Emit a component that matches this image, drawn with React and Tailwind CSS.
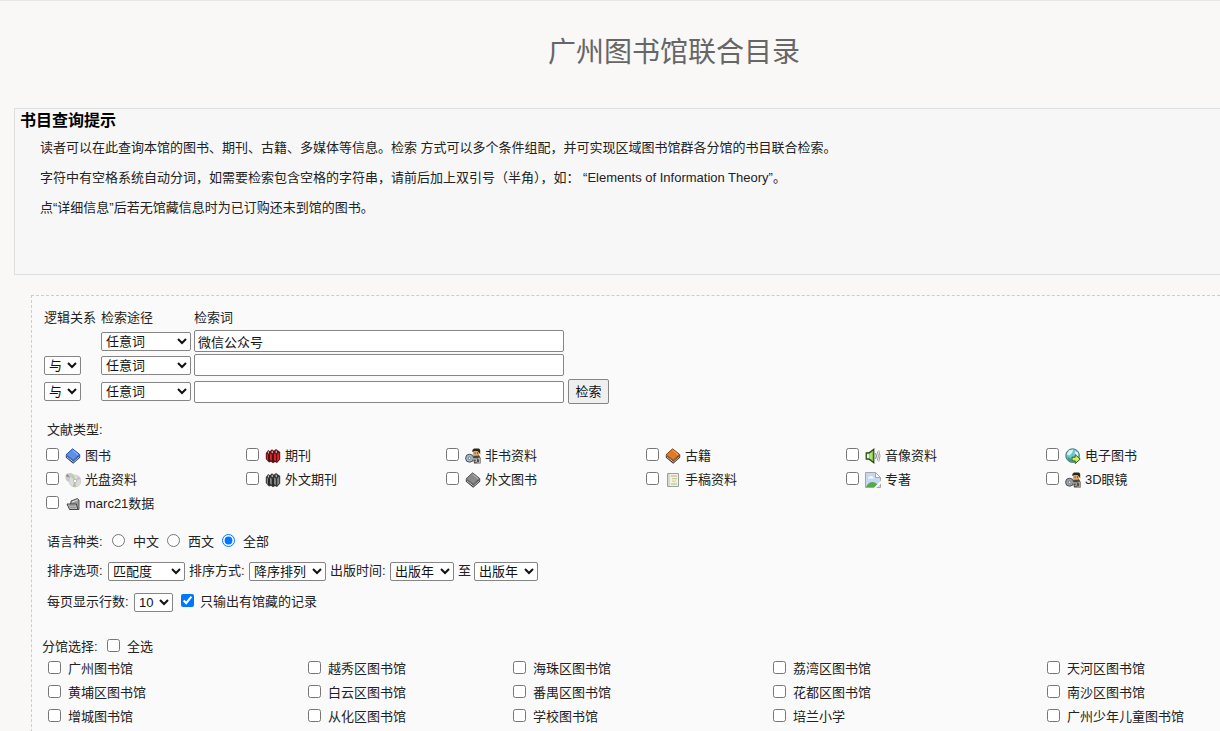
import { useState } from 'react';

function BookIcon({ top, side, edge }) {
  return (
    <svg className="w-4 h-4 shrink-0" viewBox="0 0 16 16" aria-hidden="true">
      <path d="M.8 7v2.6L8.2 15.8 15.2 9.4V6.6L8.2 12.6z" fill={edge} />
      <path d="M1.8 8.8 8.4 14l6-5.4" stroke="#d8d8d8" strokeWidth=".9" fill="none" />
      <path d="M7.6.8 14.8 6.6 8.2 12.2 1 6.8z" fill={top} stroke={side} strokeWidth="1" />
      <path d="M7.6 2.2 13 6.6" stroke="#fff" strokeOpacity=".4" fill="none" />
    </svg>
  );
}

function JournalIcon({ fill, dark }) {
  return (
    <svg className="w-4 h-4 shrink-0" viewBox="0 0 16 16" aria-hidden="true">
      <path d="M.8 5.2 3.2 2l1.6 1.2L7 1.2l1.8 1.6L11 1l4.2 3v7.5L12 15l-2-1-2 1.2-2-1.4-2 .6L.8 11z" fill={dark} />
      <path d="M1.8 5.5 3 6.6v5.8l-1.2-1.2zM5 5.5l1.8 1.2v6L5 11.4zM9 5.5l1.9 1.3v6.4L9 12z" fill={fill} />
      <path d="M12.2 6.4 14.2 4.4v6.8l-2 2.4z" fill={fill} />
      <path d="M3.4 3.4v2M7.2 2.8v2.4M11.2 2.6v2.6" stroke="#d8d8d8" strokeWidth="1" />
      <path d="M4 7v6M8 7v6.4" stroke="#1c1c1c" strokeWidth=".8" />
    </svg>
  );
}

function ReaderIcon({ tone }) {
  return (
    <svg className="w-4 h-4 shrink-0" viewBox="0 0 16 16" aria-hidden="true">
      <path d="M7.5 8.2 10 7h4l1.6 3v5.5H9z" fill="#4f4436" />
      <rect x="8" y="1.8" width="6" height="6" rx="1.6" fill="#e0a668" />
      <path d="M7.4 4.2V2L9 .5h5L15.2 2v4.4L14 4.6 12.6 3H9z" fill="#2d2418" />
      <path d="M9.6 5h1M12 5h1" stroke="#2d2418" />
      <circle cx="4.6" cy="10.2" r="4" fill={tone} stroke="#46505c" />
      <circle cx="4.6" cy="10.2" r="1.3" fill="#f2f2f2" stroke="#59636d" strokeWidth=".7" />
      <path d="M8 11h3.4v2.6H9.6M12.6 10.5h2v4.5h-2.6" stroke={tone} strokeWidth="1.4" fill="none" />
    </svg>
  );
}

function SpeakerIcon() {
  return (
    <svg className="w-4 h-4 shrink-0" viewBox="0 0 16 16" aria-hidden="true">
      <path d="M1.2 4.8h3L8.8 1.2v13.6L4.2 11.2h-3z" fill="#86c84b" stroke="#2e4320" strokeWidth="1.2" />
      <path d="M2 6h2.2v4H2z" fill="#e2f6ca" />
      <path d="M6 5v6" stroke="#c9eda0" strokeWidth="1.2" />
      <path d="M10.6 5.2q1.6 2.8 0 5.6" stroke="#6f6f6f" fill="none" />
      <path d="M12.2 3.4q2.4 4.6 0 9.2M13.8 2.4q2.4 5.6 0 11.2" stroke="#a0a0a0" fill="none" />
    </svg>
  );
}

function GlobeIcon() {
  return (
    <svg className="w-4 h-4 shrink-0" viewBox="0 0 16 16" aria-hidden="true">
      <circle cx="7.6" cy="7.6" r="6.8" fill="#69c5d6" stroke="#41717c" />
      <path d="M4 2.2 8.4 1.4 7 5 4.4 7.4 1.6 6.6zM10 3l3.4 2-.6 3.6-3.2-1z" fill="#d8f2ee" />
      <path d="M2 9l3.4 1.2L6.8 14 3.6 12.4z" fill="#459d6c" />
      <path d="M7 9.2h3.2V6.6l5 4.5-5 4.5v-2.7H7z" fill="#dce95a" stroke="#25602c" />
    </svg>
  );
}

function DiscIcon() {
  return (
    <svg className="w-4 h-4 shrink-0" viewBox="0 0 16 16" aria-hidden="true">
      <circle cx="5" cy="5.6" r="4.6" fill="#c9c9c9" />
      <path d="M5 5.6.6 4.2 2.2 1.8z" fill="#8f8f8f" />
      <circle cx="10" cy="9" r="6" fill="#dcdcdc" stroke="#c2c2c2" strokeWidth=".6" />
      <path d="M10 9 6 4.6 9 3z" fill="#a8d49a" />
      <path d="M10 9 13.4 4.2 15.6 7z" fill="#d9b6dc" />
      <path d="M10 9l1 5.8-3.4-.4z" fill="#9cc98d" />
      <circle cx="10" cy="9" r="1.7" fill="#fff" stroke="#9c9c9c" strokeWidth=".6" />
    </svg>
  );
}

function ManuscriptIcon() {
  return (
    <svg className="w-4 h-4 shrink-0" viewBox="0 0 16 16" aria-hidden="true">
      <path d="M2.5 1.5h11v13h-11z" fill="#f4f2e4" stroke="#98a098" />
      <path d="M3 2h2v12H3z" fill="#cfdccf" />
      <path d="M6 4h6" stroke="#e6b49c" strokeWidth="1.4" />
      <path d="M7 6.6h5M6 12h6" stroke="#b4d69a" strokeWidth="1.4" />
      <path d="M7 9.2h4" stroke="#ecd68e" strokeWidth="1.6" />
    </svg>
  );
}

function BrokenImageIcon() {
  return (
    <svg className="w-4 h-4 shrink-0" viewBox="0 0 16 16" aria-hidden="true">
      <path d="M.5.5h10l5 5v10H.5z" fill="#c4d8f5" stroke="#a6a6a6" />
      <path d="M10.5.5v5h5z" fill="#fff" stroke="#a6a6a6" />
      <path d="M3 6.4q0-1.6 1.8-1.6.8-1.4 2.2-.4 1.8 0 1.6 2z" fill="#fff" />
      <path d="M1 15q2.5-5 6.5-5 3 0 5 2.5L10 15z" fill="#57a846" />
      <path d="M16 8.5 8.8 16h2.4l4.8-4.6z" fill="#fff" />
    </svg>
  );
}

function FolderIcon() {
  return (
    <svg className="w-4 h-4 shrink-0" viewBox="0 0 16 16" aria-hidden="true">
      <path d="M6 5 12.5 2.5 14 4v9.5H5z" fill="#9a9a9a" stroke="#555" />
      <path d="M7 6 12.6 4" stroke="#e6e6e6" />
      <path d="M2 8h9.4l1.4 5.5H4.6z" fill="#c0c0c0" stroke="#414141" />
      <path d="M4 9.8h6.4M5 11.6h6" stroke="#888" strokeWidth=".8" />
    </svg>
  );
}

const docTypes = [
  { label: '图书', icon: <BookIcon top="#5b8ff0" side="#2c56a8" edge="#234279" /> },
  { label: '期刊', icon: <JournalIcon fill="#e0262c" dark="#611014" /> },
  { label: '非书资料', icon: <ReaderIcon tone="#a9b7c4" /> },
  { label: '古籍', icon: <BookIcon top="#df7a26" side="#8c4713" edge="#4a3020" /> },
  { label: '音像资料', icon: <SpeakerIcon /> },
  { label: '电子图书', icon: <GlobeIcon /> },
  { label: '光盘资料', icon: <DiscIcon /> },
  { label: '外文期刊', icon: <JournalIcon fill="#858585" dark="#333333" /> },
  { label: '外文图书', icon: <BookIcon top="#8a8a8a" side="#5c5c5c" edge="#3c3c3c" /> },
  { label: '手稿资料', icon: <ManuscriptIcon /> },
  { label: '专著', icon: <BrokenImageIcon /> },
  { label: '3D眼镜', icon: <ReaderIcon tone="#a0a0a0" /> },
  { label: 'marc21数据', icon: <FolderIcon /> }
];

const branches = [
  '广州图书馆', '越秀区图书馆', '海珠区图书馆', '荔湾区图书馆', '天河区图书馆',
  '黄埔区图书馆', '白云区图书馆', '番禺区图书馆', '花都区图书馆', '南沙区图书馆',
  '增城图书馆', '从化区图书馆', '学校图书馆', '培兰小学', '广州少年儿童图书馆'
];

const languages = ['中文', '西文', '全部'];

function Select({ label, options, className }) {
  return (
    <select
      aria-label={label}
      className={`h-[19px] shrink-0 border border-[#858585] rounded-[2px] bg-white text-[#111] ${className}`}
    >
      {options.map((option) => <option key={option}>{option}</option>)}
    </select>
  );
}

function SearchRow({ index, className, children }) {
  return (
    <div className={`flex items-center ${className}`}>
      <div className="w-[57px] shrink-0 flex">
        {index > 0 && <Select label="逻辑关系" options={['与', '或', '非']} className="w-[37px]" />}
      </div>
      <Select label="检索途径" options={['任意词', '题名', '作者', '主题']} className="w-[90px] mr-[3px]" />
      <input
        type="text"
        aria-label="检索词"
        defaultValue={index === 0 ? '微信公众号' : ''}
        className="w-[370px] h-[22px] px-[3px] bg-white border border-[#858585] rounded-[2px] text-[#111]"
      />
      {children}
    </div>
  );
}

export default function App() {
  const [language, setLanguage] = useState('全部');
  const [selected, setSelected] = useState([]);

  const toggleBranch = (name) => {
    setSelected((list) => (list.includes(name) ? list.filter((item) => item !== name) : [...list, name]));
  };

  return (
    <div className="min-h-screen overflow-x-hidden bg-[#f9f8f7] border-t border-[#e6e6e6] text-[13px] leading-5 text-[#222] font-['Liberation_Sans','Noto_Sans_CJK_SC',sans-serif]">
      <h1 className="pt-8 pb-[35px] pl-32 text-center text-[28px] leading-10 text-[#666]">
        广州图书馆联合目录
      </h1>

      <section className="ml-3.5 h-[167px] border border-r-0 border-[#dedede] bg-[#f7f7f7] pl-[5px]">
        <h2 className="text-base leading-6 font-bold text-black">书目查询提示</h2>
        <div className="pl-5 leading-[30px]">
          <p>读者可以在此查询本馆的图书、期刊、古籍、多媒体等信息。检索 方式可以多个条件组配，并可实现区域图书馆群各分馆的书目联合检索。</p>
          <p>字符中有空格系统自动分词，如需要检索包含空格的字符串，请前后加上双引号（半角），如： “Elements of Information Theory”。</p>
          <p>点“详细信息”后若无馆藏信息时为已订购还未到馆的图书。</p>
        </div>
      </section>

      <form
        className="mt-5 ml-[31px] border border-r-0 border-dashed border-[#ccc] bg-[#fafafa] pt-3 pb-8 pl-3"
        onSubmit={(event) => event.preventDefault()}
      >
        <div className="flex">
          <span className="w-[57px]">逻辑关系</span>
          <span className="w-[93px]">检索途径</span>
          <span>检索词</span>
        </div>
        <SearchRow index={0} className="mt-0.5" />
        <SearchRow index={1} className="mt-0.5" />
        <SearchRow index={2} className="mt-[3px]">
          <button
            type="submit"
            className="ml-1 w-[41px] h-[25px] bg-[#efefef] border border-[#858585] rounded-[2px] text-[#111]"
          >
            检索
          </button>
        </SearchRow>

        <fieldset className="mt-4 pl-0.5">
          <legend className="pl-px">文献类型:</legend>
          <div className="mt-1 grid grid-cols-[repeat(6,200px)]">
            {docTypes.map((type) => (
              <label key={type.label} className="flex items-center h-6 whitespace-nowrap">
                <input type="checkbox" className="w-[13px] h-[13px] mb-1 mr-1.5" />
                {type.icon}
                <span className="ml-1">{type.label}</span>
              </label>
            ))}
          </div>
        </fieldset>

        <div className="mt-4 pl-[3px] flex items-center">
          <span className="w-[65px]">语言种类:</span>
          {languages.map((name) => (
            <label key={name} className="w-[55px] flex items-center">
              <input
                type="radio"
                name="language"
                checked={language === name}
                onChange={() => setLanguage(name)}
                className="w-[13px] h-[13px] mb-1 mr-2"
              />
              {name}
            </label>
          ))}
        </div>

        <div className="mt-[9px] pl-[3px] flex items-center">
          <span className="w-[61px]">排序选项:</span>
          <Select label="排序选项" options={['匹配度', '出版年', '题名']} className="w-[77px] mr-1" />
          <span className="w-[60px]">排序方式:</span>
          <Select label="排序方式" options={['降序排列', '升序排列']} className="w-[77px] mr-1" />
          <span className="w-[60px]">出版时间:</span>
          <Select label="出版时间起" options={['出版年', '2020', '2019']} className="w-[64px] mr-1" />
          <span className="w-4">至</span>
          <Select label="出版时间止" options={['出版年', '2020', '2019']} className="w-[64px]" />
        </div>

        <div className="mt-[11px] pl-[3px] flex items-center">
          <span className="w-[87px]">每页显示行数:</span>
          <Select label="每页显示行数" options={['10', '20', '50']} className="w-[39px] mr-2" />
          <label className="flex items-center">
            <input type="checkbox" defaultChecked className="w-[13px] h-[13px] mb-1 mr-1.5" />
            只输出有馆藏的记录
          </label>
        </div>

        <div className="mt-[25px] -ml-0.5 flex items-center">
          <span className="w-[65px]">分馆选择:</span>
          <label className="flex items-center">
            <input
              type="checkbox"
              checked={selected.length === branches.length}
              onChange={(event) => setSelected(event.target.checked ? branches : [])}
              className="w-[13px] h-[13px] mb-1 mr-[7px]"
            />
            全选
          </label>
        </div>
        <div className="pl-1 grid grid-cols-[260px_205px_260px_274px_1fr]">
          {branches.map((name) => (
            <label key={name} className="flex items-center h-6 whitespace-nowrap">
              <input
                type="checkbox"
                checked={selected.includes(name)}
                onChange={() => toggleBranch(name)}
                className="w-[13px] h-[13px] mb-1 mr-[7px]"
              />
              {name}
            </label>
          ))}
        </div>
      </form>
    </div>
  );
}
